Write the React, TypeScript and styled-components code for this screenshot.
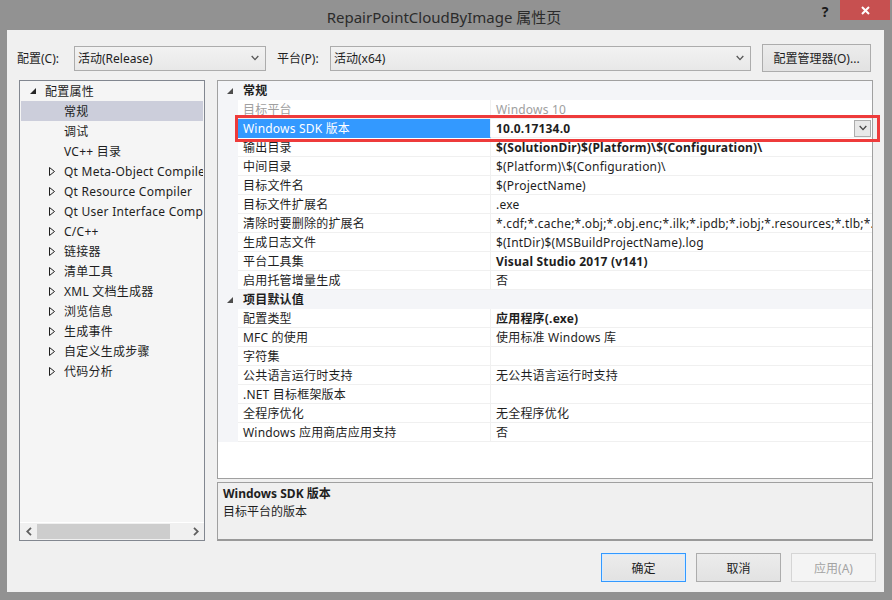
import React from 'react';
import styled, { createGlobalStyle, css } from 'styled-components';

const GlobalStyle = createGlobalStyle`
  html, body {
    margin: 0;
    padding: 0;
  }
  body {
    font-family: "Noto Sans", "Noto Sans CJK SC", sans-serif;
    font-size: 12px;
    color: #1e1e1e;
  }
  * {
    box-sizing: border-box;
  }
`;

const Frame = styled.div`
  width: 892px;
  height: 600px;
  background: #929292;
  display: flex;
  flex-direction: column;
  overflow: hidden;
`;

const TitleBar = styled.div`
  height: 30px;
  position: relative;
  display: flex;
  align-items: center;
  justify-content: center;
`;

const Title = styled.div`
  font-size: 15px;
  color: #2b2b2b;
  padding-top: 2px;
  margin-left: -4px;
`;

const TitleButtons = styled.div`
  position: absolute;
  top: 0;
  right: 2px;
  display: flex;
  align-items: flex-start;
`;

const HelpButton = styled.div`
  width: 30px;
  height: 20px;
  display: flex;
  align-items: center;
  justify-content: center;
  font-weight: bold;
  font-size: 14px;
  color: #1a1a1a;
  padding-top: 3px;
`;

const CloseButton = styled.div`
  width: 50px;
  height: 20px;
  background: #c75050;
  display: flex;
  align-items: center;
  justify-content: center;
`;

const Body = styled.div`
  flex: 1;
  margin: 0 8px 8px 7px;
  background: #f0f0f0;
  padding-left: 10px;
  display: flex;
  flex-direction: column;
`;

const Toolbar = styled.div`
  margin-top: 14px;
  height: 28px;
  display: flex;
  align-items: center;
`;

const FieldLabel = styled.span<{ $width: number; $gap?: number }>`
  width: ${(p) => p.$width}px;
  margin-left: ${(p) => p.$gap || 0}px;
  white-space: nowrap;
`;

const Combo = styled.div<{ $width: number }>`
  width: ${(p) => p.$width}px;
  height: 25px;
  border: 1px solid #acacac;
  background: linear-gradient(#f2f2f2, #e8e8e8);
  display: flex;
  align-items: center;
  justify-content: space-between;
  padding: 0 6px 0 3px;
`;

const ManagerButton = styled.div`
  margin-left: 11px;
  width: 109px;
  height: 28px;
  border: 1px solid #acacac;
  background: linear-gradient(#ececec, #e2e2e2);
  display: flex;
  align-items: center;
  justify-content: center;
  white-space: nowrap;
`;

const Main = styled.div`
  margin-top: 8px;
  margin-left: 2px;
  display: flex;
  gap: 12px;
`;

const Tree = styled.div`
  width: 186px;
  height: 461px;
  border: 1px solid #828790;
  background: #f5f5f5;
  display: flex;
  flex-direction: column;
  letter-spacing: 0.25px;
`;

const TreeList = styled.div`
  flex: 1;
  overflow: hidden;
`;

const TreeItem = styled.div<{ $depth: number; $selected?: boolean }>`
  height: 20px;
  margin: 0 1px;
  display: flex;
  align-items: center;
  padding-left: ${(p) => 7 + p.$depth * 19}px;
  white-space: nowrap;
  overflow: hidden;
  ${(p) =>
    p.$selected &&
    css`
      background: #cccedb;
    `}
`;

const Expander = styled.span`
  width: 17px;
  flex: none;
  display: flex;
  align-items: center;
  padding-left: 2px;
`;

const HScroll = styled.div`
  height: 18px;
  border-top: 1px solid #ffffff;
  background: #f0f0f0;
  display: flex;
  align-items: center;
`;

const ScrollArrow = styled.div`
  width: 17px;
  height: 17px;
  display: flex;
  align-items: center;
  justify-content: center;
`;

const ScrollTrack = styled.div`
  flex: 1;
  height: 17px;
  display: flex;
  align-items: stretch;
`;

const ScrollThumb = styled.div`
  width: 133px;
  margin: 1px 0;
  background: #cdcdcd;
`;

const RightColumn = styled.div`
  position: relative;
  width: 656px;
  display: flex;
  flex-direction: column;
  gap: 3px;
`;

const Grid = styled.div`
  height: 399px;
  border: 1px solid #a0a0a0;
  background: #ffffff;
  overflow: hidden;
  letter-spacing: 0.2px;
`;

const CategoryRow = styled.div`
  height: 19px;
  display: grid;
  grid-template-columns: 20px 1fr;
  background: #f4f5f8;
  align-items: start;
  font-weight: bold;
  line-height: 16px;
  padding-top: 2px;
`;

const CategoryToggle = styled.span`
  display: flex;
  align-items: center;
  height: 16px;
  padding-left: 9px;
`;

const CategoryLabel = styled.span`
  padding-left: 5px;
`;

const PropRow = styled.div`
  height: 19px;
  display: grid;
  grid-template-columns: 20px 253px 1fr;
`;

const Gutter = styled.div`
  background: #f4f5f8;
`;

const NameCell = styled.div<{ $muted?: boolean; $selected?: boolean }>`
  border-bottom: 1px solid #f0f0f0;
  border-right: 1px solid #f0f0f0;
  padding: 2px 0 0 5px;
  line-height: 16px;
  white-space: nowrap;
  overflow: hidden;
  color: ${(p) => (p.$muted ? '#a0a0a0' : '#1e1e1e')};
  ${(p) =>
    p.$selected &&
    css`
      background: #3399ff;
      color: #ffffff;
      border-bottom-color: #3399ff;
    `}
`;

const ValueCell = styled.div<{ $muted?: boolean; $bold?: boolean }>`
  border-bottom: 1px solid #f0f0f0;
  padding-left: 5px;
  white-space: nowrap;
  overflow: hidden;
  display: flex;
  align-items: center;
  justify-content: space-between;
  color: ${(p) => (p.$muted ? '#a0a0a0' : '#1e1e1e')};
  font-weight: ${(p) => (p.$bold ? 'bold' : 'normal')};
`;

const ValueText = styled.span`
  line-height: 16px;
  padding-top: 2px;
  align-self: flex-start;
`;

const DropButton = styled.div`
  width: 17px;
  height: 17px;
  margin-right: 1px;
  flex: none;
  border: 1px solid #acacac;
  background: #e8e8e8;
  display: flex;
  align-items: center;
  justify-content: center;
`;

const Highlight = styled.div`
  position: absolute;
  left: 18px;
  top: 35px;
  width: 645px;
  height: 27px;
  border: 3px solid #ee3b3b;
  pointer-events: none;
`;

const Description = styled.div`
  height: 59px;
  border: 1px solid #a0a0a0;
  border-bottom: 2px solid #999999;
  background: #f0f0f0;
  padding: 2px 5px;
  line-height: 18px;
`;

const DescTitle = styled.div`
  font-weight: bold;
`;

const Footer = styled.div`
  margin-top: 12px;
  padding-right: 8px;
  display: flex;
  justify-content: flex-end;
  gap: 10px;
`;

const DialogButton = styled.div<{ $variant?: 'default' | 'disabled' }>`
  width: 85px;
  height: 29px;
  display: flex;
  align-items: center;
  justify-content: center;
  border: 1px solid #acacac;
  background: linear-gradient(#ececec, #e2e2e2);
  ${(p) =>
    p.$variant === 'default' &&
    css`
      border-color: #3399ff;
      box-shadow: inset 0 0 0 1px #d6ebff;
    `}
  ${(p) =>
    p.$variant === 'disabled' &&
    css`
      border-color: #d5d5d5;
      background: #f4f4f4;
      color: #a3a3a3;
    `}
`;

const ExpandedIcon = ({ color = '#262626' }: { color?: string }) => (
  <svg width="6" height="6" viewBox="0 0 6 6">
    <path d="M6 0 L6 6 L0 6 Z" fill={color} />
  </svg>
);

const CollapsedIcon = () => (
  <svg width="6" height="9" viewBox="0 0 6 9">
    <path d="M0.5 0.5 L5.5 4.5 L0.5 8.5 Z" fill="none" stroke="#1e1e1e" strokeWidth="1" />
  </svg>
);

const Chevron = ({ color = '#555' }: { color?: string }) => (
  <svg width="8" height="6" viewBox="0 0 8 6">
    <path d="M0.7 1 L4 4.6 L7.3 1" fill="none" stroke={color} strokeWidth="1.3" />
  </svg>
);

const SideChevron = ({ dir }: { dir: 'left' | 'right' }) => (
  <svg width="6" height="9" viewBox="0 0 6 9">
    <path
      d={dir === 'left' ? 'M5 0.8 L1.2 4.5 L5 8.2' : 'M1 0.8 L4.8 4.5 L1 8.2'}
      fill="none"
      stroke="#606060"
      strokeWidth="1.8"
    />
  </svg>
);

type TreeNode = { label: string; depth: number; kind: 'expanded' | 'collapsed' | 'leaf'; selected?: boolean };

const treeNodes: TreeNode[] = [
  { label: '配置属性', depth: 0, kind: 'expanded' },
  { label: '常规', depth: 1, kind: 'leaf', selected: true },
  { label: '调试', depth: 1, kind: 'leaf' },
  { label: 'VC++ 目录', depth: 1, kind: 'leaf' },
  { label: 'Qt Meta-Object Compiler', depth: 1, kind: 'collapsed' },
  { label: 'Qt Resource Compiler', depth: 1, kind: 'collapsed' },
  { label: 'Qt User Interface Compiler', depth: 1, kind: 'collapsed' },
  { label: 'C/C++', depth: 1, kind: 'collapsed' },
  { label: '链接器', depth: 1, kind: 'collapsed' },
  { label: '清单工具', depth: 1, kind: 'collapsed' },
  { label: 'XML 文档生成器', depth: 1, kind: 'collapsed' },
  { label: '浏览信息', depth: 1, kind: 'collapsed' },
  { label: '生成事件', depth: 1, kind: 'collapsed' },
  { label: '自定义生成步骤', depth: 1, kind: 'collapsed' },
  { label: '代码分析', depth: 1, kind: 'collapsed' },
];

type Prop = { name: string; value: string; bold?: boolean; muted?: boolean; selected?: boolean };
type Section = { title: string; props: Prop[] };

const sections: Section[] = [
  {
    title: '常规',
    props: [
      { name: '目标平台', value: 'Windows 10', muted: true },
      { name: 'Windows SDK 版本', value: '10.0.17134.0', bold: true, selected: true },
      { name: '输出目录', value: '$(SolutionDir)$(Platform)\\$(Configuration)\\', bold: true },
      { name: '中间目录', value: '$(Platform)\\$(Configuration)\\' },
      { name: '目标文件名', value: '$(ProjectName)' },
      { name: '目标文件扩展名', value: '.exe' },
      {
        name: '清除时要删除的扩展名',
        value:
          '*.cdf;*.cache;*.obj;*.obj.enc;*.ilk;*.ipdb;*.iobj;*.resources;*.tlb;*.tli;*.tlh;*.tmp;*.rsp;*.pgc;*.pgd;*.meta;*.tlog',
      },
      { name: '生成日志文件', value: '$(IntDir)$(MSBuildProjectName).log' },
      { name: '平台工具集', value: 'Visual Studio 2017 (v141)', bold: true },
      { name: '启用托管增量生成', value: '否' },
    ],
  },
  {
    title: '项目默认值',
    props: [
      { name: '配置类型', value: '应用程序(.exe)', bold: true },
      { name: 'MFC 的使用', value: '使用标准 Windows 库' },
      { name: '字符集', value: '' },
      { name: '公共语言运行时支持', value: '无公共语言运行时支持' },
      { name: '.NET 目标框架版本', value: '' },
      { name: '全程序优化', value: '无全程序优化' },
      { name: 'Windows 应用商店应用支持', value: '否' },
    ],
  },
];

const App: React.FC = () => {
  return (
    <Frame>
      <GlobalStyle />
      <TitleBar>
        <Title>RepairPointCloudByImage 属性页</Title>
        <TitleButtons>
          <HelpButton>?</HelpButton>
          <CloseButton>
            <svg width="9" height="9" viewBox="0 0 9 9">
              <path d="M1 1 L8 8 M8 1 L1 8" stroke="#ffffff" strokeWidth="2" />
            </svg>
          </CloseButton>
        </TitleButtons>
      </TitleBar>

      <Body>
        <Toolbar>
          <FieldLabel $width={57}>配置(C):</FieldLabel>
          <Combo $width={192}>
            <span>活动(Release)</span>
            <Chevron />
          </Combo>
          <FieldLabel $width={53} $gap={11}>
            平台(P):
          </FieldLabel>
          <Combo $width={421}>
            <span>活动(x64)</span>
            <Chevron />
          </Combo>
          <ManagerButton>配置管理器(O)...</ManagerButton>
        </Toolbar>

        <Main>
          <Tree>
            <TreeList>
              {treeNodes.map((node) => (
                <TreeItem key={node.label} $depth={node.depth} $selected={node.selected}>
                  <Expander>
                    {node.kind === 'expanded' && <ExpandedIcon />}
                    {node.kind === 'collapsed' && <CollapsedIcon />}
                  </Expander>
                  {node.label}
                </TreeItem>
              ))}
            </TreeList>
            <HScroll>
              <ScrollArrow>
                <SideChevron dir="left" />
              </ScrollArrow>
              <ScrollTrack>
                <ScrollThumb />
              </ScrollTrack>
              <ScrollArrow>
                <SideChevron dir="right" />
              </ScrollArrow>
            </HScroll>
          </Tree>

          <RightColumn>
            <Grid>
              {sections.map((section) => (
                <React.Fragment key={section.title}>
                  <CategoryRow>
                    <CategoryToggle>
                      <ExpandedIcon color="#4d4d4d" />
                    </CategoryToggle>
                    <CategoryLabel>{section.title}</CategoryLabel>
                  </CategoryRow>
                  {section.props.map((prop) => (
                    <PropRow key={prop.name}>
                      <Gutter />
                      <NameCell $muted={prop.muted} $selected={prop.selected}>
                        {prop.name}
                      </NameCell>
                      <ValueCell $muted={prop.muted} $bold={prop.bold}>
                        <ValueText>{prop.value}</ValueText>
                        {prop.selected && (
                          <DropButton>
                            <Chevron color="#444" />
                          </DropButton>
                        )}
                      </ValueCell>
                    </PropRow>
                  ))}
                </React.Fragment>
              ))}
            </Grid>
            <Description>
              <DescTitle>Windows SDK 版本</DescTitle>
              <div>目标平台的版本</div>
            </Description>
            <Highlight />
          </RightColumn>
        </Main>

        <Footer>
          <DialogButton $variant="default">确定</DialogButton>
          <DialogButton>取消</DialogButton>
          <DialogButton $variant="disabled">应用(A)</DialogButton>
        </Footer>
      </Body>
    </Frame>
  );
};

export default App;
